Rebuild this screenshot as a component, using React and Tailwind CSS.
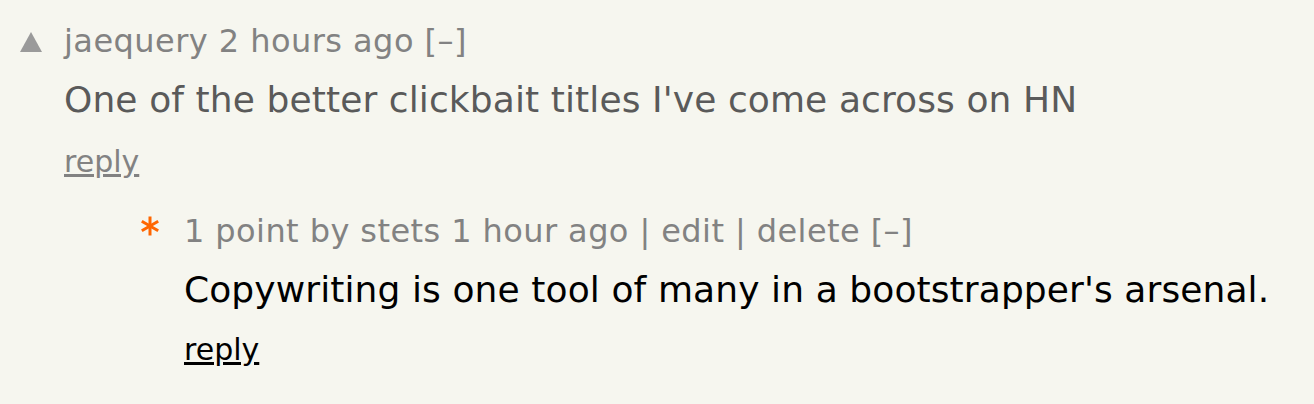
import React from "react";

export default function App() {
  return (
    <div className="min-h-[404px] w-[1314px] bg-[#f6f6ef] font-['DejaVu_Sans',Verdana,sans-serif]">
      <div className="pt-[23px]">
        {/* Comment 1 */}
        <div className="flex">
          <div className="w-[64px] flex justify-start pl-[20px] pt-[9px]">
            <svg width="22" height="20" viewBox="0 0 22 20">
              <polygon points="11,0 22,20 0,20" fill="#9a9a9a" />
            </svg>
          </div>
          <div className="flex flex-col">
            <div className="text-[32px] leading-[37px] tracking-[0.45px] text-[#828282]">
              jaequery 2 hours ago [–]
            </div>
            <div className="mt-[19px] text-[36px] leading-[42px] tracking-[0.1px] text-[#5a5a5a]">
              One of the better clickbait titles I've come across on HN
            </div>
            <div className="mt-[23px] text-[30px] leading-[35px] text-[#828282] underline">
              reply
            </div>
          </div>
        </div>
        {/* Comment 2 */}
        <div className="flex mt-[34px] pl-[120px]">
          <div className="w-[64px] flex justify-start pl-[20px] pt-[3px]">
            <svg width="20" height="20" viewBox="0 0 20 20">
              <g stroke="#ff6600" strokeWidth="3" strokeLinecap="butt">
                <line x1="10" y1="0.5" x2="10" y2="19.5" />
                <line x1="1.8" y1="5.25" x2="18.2" y2="14.75" />
                <line x1="1.8" y1="14.75" x2="18.2" y2="5.25" />
              </g>
            </svg>
          </div>
          <div className="flex flex-col">
            <div className="text-[32px] leading-[37px] tracking-[0.42px] text-[#828282]">
              1 point by stets 1 hour ago | edit | delete [–]
            </div>
            <div className="mt-[19px] text-[36px] leading-[42px] tracking-[0.1px] text-black">
              Copywriting is one tool of many in a bootstrapper's arsenal.
            </div>
            <div className="mt-[21px] text-[30px] leading-[35px] text-black underline">
              reply
            </div>
          </div>
        </div>
      </div>
    </div>
  );
}
